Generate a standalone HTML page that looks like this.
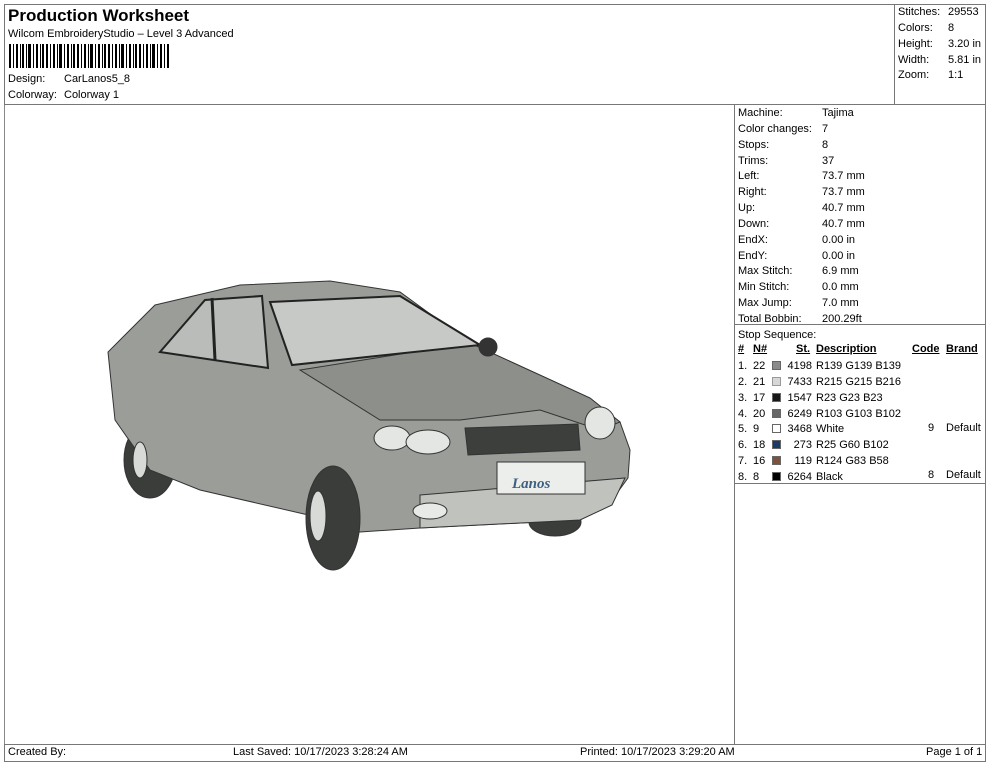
<!DOCTYPE html>
<html><head><meta charset="utf-8"><style>
body{margin:0;width:990px;height:762px;background:#fff;font-family:"Liberation Sans",sans-serif;color:#000;position:relative;overflow:hidden}
.a{position:absolute;font-size:11px;line-height:13px;white-space:nowrap}
.b{position:absolute;border:1px solid #777;box-sizing:border-box}
.sw{display:inline-block;width:9px;height:9px;border:1px solid #666;vertical-align:-1px;box-sizing:border-box}
</style></head><body>
<div class="b" style="left:4px;top:4px;width:982px;height:758px;border-color:#888"></div>
<div class="b" style="left:4px;top:4px;width:982px;height:101px"></div>
<div class="b" style="left:894px;top:4px;width:92px;height:101px"></div>
<div class="b" style="left:734px;top:104px;width:252px;height:641px"></div>
<div class="b" style="left:4px;top:744px;width:982px;height:18px"></div>
<div class="b" style="left:734px;top:324px;width:252px;height:1px;border-width:1px 0 0 0"></div>
<div class="b" style="left:734px;top:483px;width:252px;height:1px;border-width:1px 0 0 0"></div>

<div class="a" style="left:8px;top:6px;font-size:17px;line-height:20px;font-weight:bold">Production Worksheet</div>
<div class="a" style="left:8px;top:28px">Wilcom EmbroideryStudio – Level 3 Advanced</div>
<svg style="position:absolute;left:9px;top:44px" width="162" height="24">
<g fill="#000">
<rect x="0" y="0" width="2" height="24"/><rect x="4" y="0" width="1" height="24"/><rect x="7" y="0" width="2" height="24"/><rect x="11" y="0" width="1" height="24"/><rect x="13" y="0" width="2" height="24"/><rect x="17" y="0" width="1" height="24"/><rect x="19" y="0" width="3" height="24"/><rect x="24" y="0" width="1" height="24"/><rect x="27" y="0" width="2" height="24"/><rect x="31" y="0" width="1" height="24"/><rect x="33" y="0" width="2" height="24"/><rect x="37" y="0" width="2" height="24"/><rect x="41" y="0" width="1" height="24"/><rect x="44" y="0" width="2" height="24"/><rect x="48" y="0" width="1" height="24"/><rect x="50" y="0" width="3" height="24"/><rect x="55" y="0" width="1" height="24"/><rect x="58" y="0" width="2" height="24"/><rect x="62" y="0" width="1" height="24"/><rect x="64" y="0" width="2" height="24"/><rect x="68" y="0" width="2" height="24"/><rect x="72" y="0" width="1" height="24"/><rect x="75" y="0" width="2" height="24"/><rect x="79" y="0" width="1" height="24"/><rect x="81" y="0" width="3" height="24"/><rect x="86" y="0" width="1" height="24"/><rect x="89" y="0" width="2" height="24"/><rect x="93" y="0" width="1" height="24"/><rect x="95" y="0" width="2" height="24"/><rect x="99" y="0" width="2" height="24"/><rect x="103" y="0" width="1" height="24"/><rect x="106" y="0" width="2" height="24"/><rect x="110" y="0" width="1" height="24"/><rect x="112" y="0" width="3" height="24"/><rect x="117" y="0" width="1" height="24"/><rect x="120" y="0" width="2" height="24"/><rect x="124" y="0" width="1" height="24"/><rect x="126" y="0" width="2" height="24"/><rect x="130" y="0" width="2" height="24"/><rect x="134" y="0" width="1" height="24"/><rect x="137" y="0" width="2" height="24"/><rect x="141" y="0" width="1" height="24"/><rect x="143" y="0" width="3" height="24"/><rect x="148" y="0" width="1" height="24"/><rect x="151" y="0" width="2" height="24"/><rect x="155" y="0" width="1" height="24"/><rect x="158" y="0" width="2" height="24"/>
</g></svg>
<div class="a" style="left:8px;top:73px">Design:</div><div class="a" style="left:64px;top:73px">CarLanos5_8</div>
<div class="a" style="left:8px;top:89px">Colorway:</div><div class="a" style="left:64px;top:89px">Colorway 1</div>

<div class="a" style="left:898px;top:6px">Stitches:</div><div class="a" style="left:948px;top:6px">29553</div>
<div class="a" style="left:898px;top:22px">Colors:</div><div class="a" style="left:948px;top:22px">8</div>
<div class="a" style="left:898px;top:38px">Height:</div><div class="a" style="left:948px;top:38px">3.20 in</div>
<div class="a" style="left:898px;top:54px">Width:</div><div class="a" style="left:948px;top:54px">5.81 in</div>
<div class="a" style="left:898px;top:69px">Zoom:</div><div class="a" style="left:948px;top:69px">1:1</div>

<div class="a" style="left:738px;top:106px;line-height:15.85px">Machine:<br>Color changes:<br>Stops:<br>Trims:<br>Left:<br>Right:<br>Up:<br>Down:<br>EndX:<br>EndY:<br>Max Stitch:<br>Min Stitch:<br>Max Jump:<br>Total Bobbin:<br>Stop Sequence:</div>
<div class="a" style="left:822px;top:106px;line-height:15.85px">Tajima<br>7<br>8<br>37<br>73.7 mm<br>73.7 mm<br>40.7 mm<br>40.7 mm<br>0.00 in<br>0.00 in<br>6.9 mm<br>0.0 mm<br>7.0 mm<br>200.29ft</div>

<div class="a" style="left:738px;top:343px;font-weight:bold;text-decoration:underline">#</div>
<div class="a" style="left:753px;top:343px;font-weight:bold;text-decoration:underline">N#</div>
<div class="a" style="left:796px;top:343px;font-weight:bold;text-decoration:underline">St.</div>
<div class="a" style="left:816px;top:343px;font-weight:bold;text-decoration:underline">Description</div>
<div class="a" style="left:912px;top:343px;font-weight:bold;text-decoration:underline">Code</div>
<div class="a" style="left:946px;top:343px;font-weight:bold;text-decoration:underline">Brand</div>

<div class="a" style="left:738px;top:359px;line-height:15.85px">1.<br>2.<br>3.<br>4.<br>5.<br>6.<br>7.<br>8.</div>
<div class="a" style="left:753px;top:359px;line-height:15.85px">22<br>21<br>17<br>20<br>9<br>18<br>16<br>8</div>
<div class="a" style="left:772px;top:359px;line-height:15.85px">
<span class="sw" style="background:#8b8b8b"></span><br><span class="sw" style="background:#d7d7d8;border-color:#999"></span><br><span class="sw" style="background:#171717"></span><br><span class="sw" style="background:#676766"></span><br><span class="sw" style="background:#fff"></span><br><span class="sw" style="background:#193c66"></span><br><span class="sw" style="background:#7c533a"></span><br><span class="sw" style="background:#000"></span></div>
<div class="a" style="left:782px;top:359px;width:30px;text-align:right;line-height:15.85px">4198<br>7433<br>1547<br>6249<br>3468<br>273<br>119<br>6264</div>
<div class="a" style="left:816px;top:359px;line-height:15.85px">R139 G139 B139<br>R215 G215 B216<br>R23 G23 B23<br>R103 G103 B102<br>White<br>R25 G60 B102<br>R124 G83 B58<br>Black</div>
<div class="a" style="left:928px;top:422px">9</div><div class="a" style="left:946px;top:422px">Default</div>
<div class="a" style="left:928px;top:469px">8</div><div class="a" style="left:946px;top:469px">Default</div>

<div class="a" style="left:8px;top:746px">Created By:</div>
<div class="a" style="left:233px;top:746px">Last Saved: 10/17/2023 3:28:24 AM</div>
<div class="a" style="left:580px;top:746px">Printed: 10/17/2023 3:29:20 AM</div>
<div class="a" style="left:926px;top:746px">Page 1 of 1</div>

<svg style="position:absolute;left:0;top:0" width="990" height="762">
<g stroke="#333" stroke-width="1">
<ellipse cx="150" cy="460" rx="26" ry="38" fill="#3a3d3a"/>
<ellipse cx="555" cy="522" rx="26" ry="14" fill="#3a3d3a"/>
<path d="M155,305 L240,285 L330,281 L400,292 L470,343 L590,398 L620,422 L630,450 L628,478 L612,500 L580,520 L420,528 L360,532 L330,520 L200,490 L150,470 L115,420 L108,352 L130,330 Z" fill="#9a9d98"/>
<path d="M470,343 L590,398 L620,422 L600,430 L540,410 L460,420 L380,420 L300,370 Z" fill="#8c8f8a"/>
<path d="M270,302 L400,296 L480,345 L292,365 Z" fill="#c6c9c5" stroke="#222" stroke-width="2"/>
<path d="M160,352 L205,300 L262,296 L268,368 Z" fill="#b9bcb8" stroke="#222" stroke-width="2"/>
<line x1="212" y1="298" x2="215" y2="360" stroke="#222" stroke-width="3"/>
<path d="M420,495 L625,478 L612,505 L580,520 L420,528 Z" fill="#bfc2bd"/>
<path d="M465,428 L578,424 L580,450 L468,455 Z" fill="#3c3f3c"/>
<rect x="497" y="462" width="88" height="32" fill="#eceeec"/>
<text x="512" y="488" font-family="Liberation Serif,serif" font-style="italic" font-weight="bold" font-size="15" fill="#3e5f80" stroke="none">Lanos</text>
<ellipse cx="392" cy="438" rx="18" ry="12" fill="#e4e6e3"/>
<ellipse cx="428" cy="442" rx="22" ry="12" fill="#e4e6e3"/>
<ellipse cx="600" cy="423" rx="15" ry="16" fill="#e4e6e3"/>
<ellipse cx="430" cy="511" rx="17" ry="8" fill="#e8eae7"/>
<ellipse cx="333" cy="518" rx="27" ry="52" fill="#3a3d3a"/>
<ellipse cx="318" cy="516" rx="8" ry="25" fill="#d8dad7"/>
<ellipse cx="140" cy="460" rx="7" ry="18" fill="#d8dad7"/>
<ellipse cx="488" cy="347" rx="9" ry="9" fill="#333"/>
</g></svg>
</body></html>
